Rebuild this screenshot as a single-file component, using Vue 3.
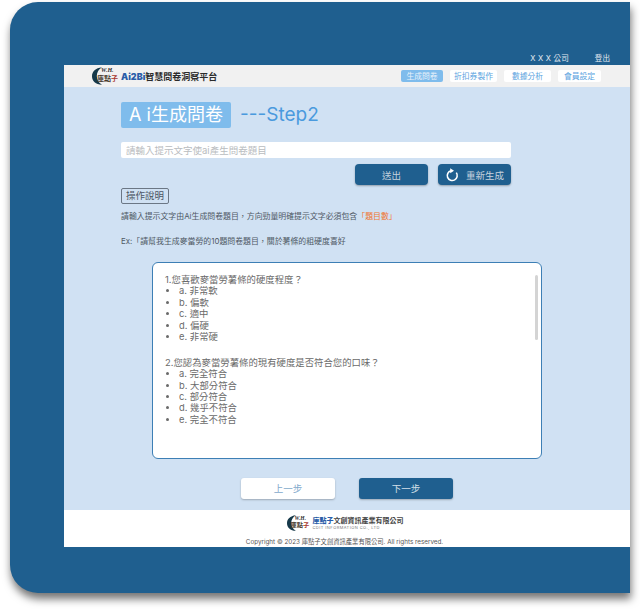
<script setup>
const navItems = ['生成問卷', '折扣券製作', '數據分析', '會員設定']
const questions = [
  {
    title: '1.您喜歡麥當勞薯條的硬度程度？',
    options: ['a. 非常軟', 'b. 偏軟', 'c. 適中', 'd. 偏硬', 'e. 非常硬'],
  },
  {
    title: '2.您認為麥當勞薯條的現有硬度是否符合您的口味？',
    options: ['a. 完全符合', 'b. 大部分符合', 'c. 部分符合', 'd. 幾乎不符合', 'e. 完全不符合'],
  },
]
</script>

<template>
  <div class="screen">
    <div class="frame">
      <div class="topbar">
        <span class="company">X X X 公司</span>
        <span class="logout">登出</span>
      </div>
      <div class="page">
        <header class="header">
          <div class="brand">
            <span class="logo">
              <svg viewBox="0 0 26 18" width="26" height="18">
                <path d="M10 0.3C3.5 1 0 4.6 0 9.2C0 14 3.6 17.6 10 17.8C6.4 15.6 4.8 12.6 4.8 9C4.8 5.6 6.6 2.4 10 0.3Z" fill="#16394a" />
              </svg>
              <span class="logo-top">W.H.</span>
              <span class="logo-main">庫點<i>子</i></span>
            </span>
            <span class="brand-name"><b>Ai2Bi</b>智慧問卷洞察平台</span>
          </div>
          <nav class="nav">
            <span
              v-for="(item, i) in navItems"
              :key="item"
              class="nav-item"
              :class="{ active: i === 0 }"
            >{{ item }}</span>
          </nav>
        </header>

        <main class="main">
          <div class="title-row">
            <span class="title-chip">A i生成問卷</span>
            <span class="step">---Step2</span>
          </div>

          <input class="prompt" type="text" placeholder="請輸入提示文字使ai產生問卷題目" />

          <div class="actions">
            <div class="btn">送出</div>
            <div class="btn">
              <svg class="refresh" viewBox="0 0 14 14" width="14" height="14">
                <path d="M11.3 4.6A5 5 0 1 1 6 2.7" fill="none" stroke="#fff" stroke-width="1.6" />
                <path d="M5.2 0.2L9 2.7L5.2 5.2Z" fill="#fff" />
              </svg>
              <span>重新生成</span>
            </div>
          </div>

          <div class="help-tag">操作說明</div>
          <p class="help">請輸入提示文字由Ai生成問卷題目，方向勁量明確提示文字必須包含<em>「題目數」</em></p>
          <p class="help example">Ex:「請幫我生成麥當勞的10題問卷題目，關於薯條的粗硬度喜好</p>

          <div class="result">
            <div class="scroll-thumb"></div>
            <div v-for="q in questions" :key="q.title" class="question">
              <div>{{ q.title }}</div>
              <ul>
                <li v-for="opt in q.options" :key="opt">{{ opt }}</li>
              </ul>
            </div>
          </div>

          <div class="steps">
            <div class="step-btn prev">上一步</div>
            <div class="step-btn next">下一步</div>
          </div>
        </main>

        <footer class="footer">
          <div class="footer-brand">
            <span class="logo small">
              <svg viewBox="0 0 26 18" width="23" height="16">
                <path d="M10 0.3C3.5 1 0 4.6 0 9.2C0 14 3.6 17.6 10 17.8C6.4 15.6 4.8 12.6 4.8 9C4.8 5.6 6.6 2.4 10 0.3Z" fill="#16394a" />
              </svg>
              <span class="logo-top">W.H.</span>
              <span class="logo-main">庫點<i>子</i></span>
            </span>
            <div class="footer-name">
              <div class="cn"><b>庫點子</b>文創資訊產業有限公司</div>
              <div class="en">CDIT INFORMATION CO., LTD</div>
            </div>
          </div>
          <div class="copyright">Copyright © 2023 庫點子文創資訊產業有限公司. All rights reserved.</div>
        </footer>
      </div>
    </div>
  </div>
</template>

<style>
html,
body {
  margin: 0;
  background: #fff;
}
</style>

<style scoped>
.screen {
  box-sizing: border-box;
  width: 640px;
  height: 611px;
  padding: 2px 10px 18px;
  overflow: hidden;
}

.frame {
  box-sizing: border-box;
  height: 591px;
  padding-left: 54px;
  background: #1f5f8f;
  border-radius: 28px 0 0 28px;
  box-shadow: 1px 6px 8px rgba(0, 0, 0, 0.55);
  font-family: Inter, "Noto Sans CJK TC", sans-serif;
}

.topbar {
  display: flex;
  justify-content: flex-end;
  align-items: center;
  height: 63px;
  padding: 47px 20px 0 0;
  box-sizing: border-box;
  gap: 26px;
  color: #e4ebf2;
  font-size: 7.6px;
}

.company {
  word-spacing: 0.5px;
}

.page {
  display: flex;
  flex-direction: column;
  height: 482px;
}

.header {
  display: flex;
  justify-content: space-between;
  align-items: center;
  height: 22px;
  padding: 0 29px 0 28px;
  background: #f1f1f1;
  flex: none;
}

.brand {
  display: flex;
  align-items: center;
  gap: 3px;
}

.logo {
  position: relative;
  display: block;
  width: 26px;
  height: 18px;
}

.logo svg {
  display: block;
}

.logo-top {
  position: absolute;
  left: 9px;
  top: -1px;
  font: italic bold 6px "Liberation Serif", serif;
  line-height: 8px;
  color: #2e2e2e;
  white-space: nowrap;
}

.logo-main {
  position: absolute;
  left: 5px;
  top: 6px;
  font-size: 7px;
  line-height: 11px;
  font-weight: 700;
  color: #46372a;
  white-space: nowrap;
}

.logo-main i {
  font-style: normal;
  color: #a8382e;
}

.logo.small {
  width: 23px;
  height: 16px;
}

.logo.small .logo-top {
  left: 8px;
  font-size: 5.5px;
}

.logo.small .logo-main {
  left: 4px;
  top: 5px;
  font-size: 6.2px;
  line-height: 10px;
}

.brand-name {
  font-size: 9px;
  font-weight: 700;
  color: #2b2b2b;
}

.brand-name b {
  color: #2b5ea8;
}

.nav {
  display: flex;
  gap: 7px;
}

.nav-item {
  display: block;
  width: 47px;
  height: 12px;
  line-height: 12px;
  text-align: center;
  font-size: 7.8px;
  color: #5aa3e0;
  background: #fff;
  border-radius: 2px;
}

.nav-item:first-child {
  width: 42px;
}

.nav-item:last-child {
  width: 43px;
}

.nav-item.active {
  color: #e8f2fb;
  background: #7fbcec;
}

.main {
  flex: 1;
  padding: 15px 119px 0 57px;
  background: #d0e1f3;
}

.title-row {
  display: flex;
  align-items: center;
  gap: 9px;
}

.title-chip {
  box-sizing: border-box;
  width: 110px;
  height: 26px;
  line-height: 26px;
  text-align: center;
  font-size: 18px;
  color: #fff;
  background: #7fbcec;
  border-radius: 2px;
}

.step {
  font-size: 19px;
  line-height: 26px;
  color: #4a9ade;
}

.prompt {
  display: block;
  box-sizing: border-box;
  width: 390px;
  height: 16px;
  margin-top: 14px;
  padding: 0 5px;
  border: none;
  border-radius: 2px;
  outline: none;
  background: #fff;
  font-family: inherit;
  font-size: 9.5px;
}

.prompt::placeholder {
  color: #b9bcc0;
}

.actions {
  display: flex;
  justify-content: flex-end;
  gap: 10px;
  width: 390px;
  margin-top: 6px;
}

.btn {
  display: flex;
  justify-content: center;
  align-items: center;
  gap: 7px;
  width: 73px;
  height: 21px;
  font-size: 9.5px;
  color: #c5d2de;
  background: #1f5f8f;
  border-radius: 4px;
  box-shadow: 0 1px 2px rgba(0, 0, 0, 0.3);
}

.help-tag {
  box-sizing: border-box;
  width: 48px;
  height: 16px;
  margin-top: 3px;
  line-height: 14px;
  text-align: center;
  font-size: 9.5px;
  color: #4b5563;
  border: 1px solid #6b7785;
  border-radius: 2px;
}

.help {
  margin: 7px 0 0;
  font-size: 7.9px;
  line-height: 11px;
  color: #4f5965;
}

.help em {
  font-style: normal;
  color: #f0752d;
}

.help.example {
  margin-top: 14px;
}

.result {
  position: relative;
  box-sizing: border-box;
  width: 390px;
  height: 197px;
  margin: 15px 0 0 31px;
  padding: 11px 12px;
  background: #fff;
  border: 1px solid #3d7fb5;
  border-radius: 6px;
  font-size: 9.4px;
  line-height: 11.4px;
  color: #6a6a6a;
}

.scroll-thumb {
  position: absolute;
  top: 12px;
  right: 3px;
  width: 3px;
  height: 65px;
  background: #d4d4d4;
  border-radius: 2px;
}

.question {
  margin-bottom: 14.4px;
}

.question ul {
  margin: 0;
  padding-left: 14px;
}

.steps {
  display: flex;
  justify-content: center;
  gap: 24px;
  margin: 19px 0 0 31px;
  width: 390px;
}

.step-btn {
  width: 94px;
  height: 21px;
  line-height: 21px;
  text-align: center;
  font-size: 9.5px;
  border-radius: 3px;
  box-shadow: 0 1px 2px rgba(0, 0, 0, 0.25);
}

.prev {
  color: #7fa9cc;
  background: #fff;
}

.next {
  color: #d4e0ea;
  background: #1f5f8f;
}

.footer {
  flex: none;
  height: 37px;
  box-sizing: border-box;
  padding-top: 5px;
  background: #fff;
  text-align: center;
}

.footer-brand {
  display: flex;
  justify-content: center;
  align-items: center;
  gap: 3px;
  height: 16px;
  margin-left: -4px;
}

.footer-name {
  text-align: left;
}

.cn {
  font-size: 7px;
  line-height: 8px;
  font-weight: 700;
  color: #444;
}

.cn b {
  color: #2b5ea8;
}

.en {
  font-size: 4px;
  line-height: 5px;
  letter-spacing: 0.45px;
  color: #777;
}

.copyright {
  margin-top: 6px;
  padding-right: 5px;
  font-size: 6.3px;
  line-height: 10px;
  color: #555;
}
</style>
